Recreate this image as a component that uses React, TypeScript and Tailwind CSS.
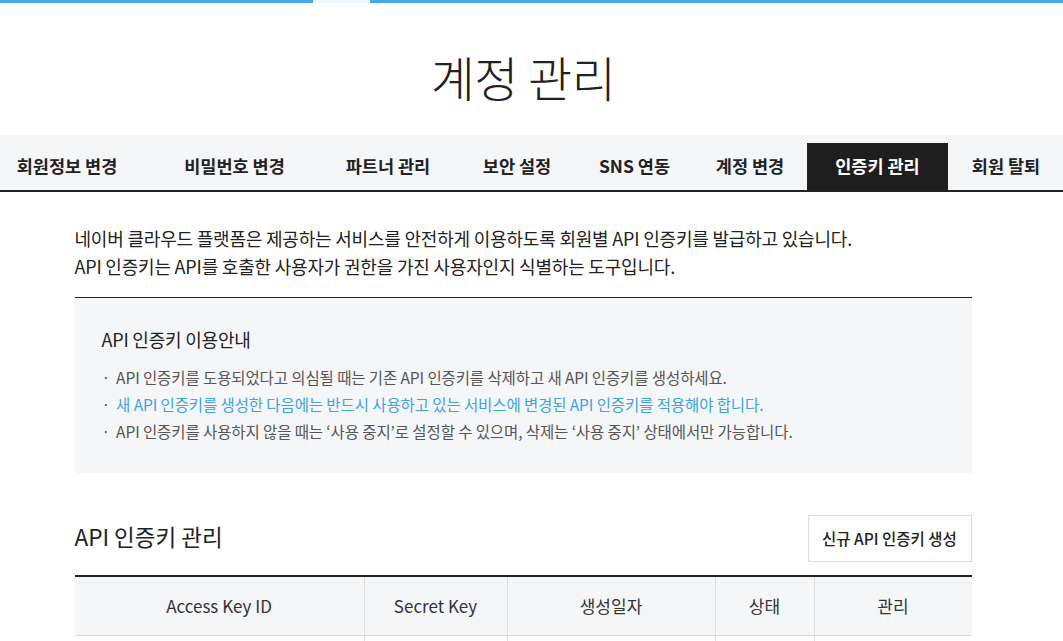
const tabs = [
  { label: '회원정보 변경', w: 'w-[168px]' },
  { label: '비밀번호 변경', w: 'w-[167px]' },
  { label: '파트너 관리', w: 'w-[140px]' },
  { label: '보안 설정', w: 'w-[118px]' },
  { label: 'SNS 연동', w: 'w-[117px]' },
  { label: '계정 변경', w: 'w-[114px]' },
  { label: '인증키 관리', w: 'w-[141px]', active: true },
  { label: '회원 탈퇴', w: 'w-[116px]' },
];

const columns = [
  { label: 'Access Key ID', w: 'w-[289px]' },
  { label: 'Secret Key', w: 'w-[143px]' },
  { label: '생성일자', w: 'w-[208px]' },
  { label: '상태', w: 'w-[99px]' },
  { label: '관리', w: 'flex-1' },
];

const font = "font-['Noto_Sans_CJK_KR','Noto_Sans',sans-serif]";

export default function App() {
  return (
    <div className={`${font} min-h-screen w-full overflow-hidden bg-white text-[#222]`}>
      {/* top progress bar */}
      <div className="flex h-[3px] w-full">
        <div className="w-[313px] bg-[#46a8e3]" />
        <div className="w-[57px] bg-[#eef7fd]" />
        <div className="flex-1 bg-[#46a8e3]" />
      </div>

      <div className="w-[1046px]">
        <h1 className="pt-[35px] pb-[21px] text-center text-[48px] font-light leading-[76px] tracking-[-0.5px] text-[#222]">
          계정 관리
        </h1>
      </div>

      {/* tabs */}
      <div className="h-[57px] w-full border-b-2 border-[#222] bg-[#f5f6f8]">
        <div className="-ml-[17px] flex h-full items-end">
          {tabs.map((t) => (
            <div
              key={t.label}
              className={`${t.w} flex h-[47px] shrink-0 items-center justify-center text-[17.5px] font-bold ${
                t.active ? 'bg-[#1e1e1e] text-white' : 'text-[#222]'
              }`}
            >
              {t.label}
            </div>
          ))}
        </div>
      </div>

      <div className="w-[1046px]">
        <div className="mx-auto w-[897px]">
          <div className="pt-[32px] pb-[17px] text-[18px] leading-[28px] tracking-[-0.2px] text-[#222]">
            <p>네이버 클라우드 플랫폼은 제공하는 서비스를 안전하게 이용하도록 회원별 API 인증키를 발급하고 있습니다.</p>
            <p>API 인증키는 API를 호출한 사용자가 권한을 가진 사용자인지 식별하는 도구입니다.</p>
          </div>

          <div className="border-t border-[#222] bg-[#f5f6f8] px-[27px] pt-[27px] pb-[28px]">
            <h3 className="text-[18px] leading-[28px] tracking-[-0.2px] text-[#222]">API 인증키 이용안내</h3>
            <ul className="mt-[11px] text-[15.5px] leading-[27px] tracking-[-0.1px] text-[#555]">
              <li className="flex gap-[6px]">
                <span>·</span>
                <span>API 인증키를 도용되었다고 의심될 때는 기존 API 인증키를 삭제하고 새 API 인증키를 생성하세요.</span>
              </li>
              <li className="flex gap-[6px] text-[#3fa3e2]">
                <span className="text-[#555]">·</span>
                <span>새 API 인증키를 생성한 다음에는 반드시 사용하고 있는 서비스에 변경된 API 인증키를 적용해야 합니다.</span>
              </li>
              <li className="flex gap-[6px]">
                <span>·</span>
                <span>API 인증키를 사용하지 않을 때는 ‘사용 중지’로 설정할 수 있으며, 삭제는 ‘사용 중지’ 상태에서만 가능합니다.</span>
              </li>
            </ul>
          </div>

          <div className="mt-[42px] flex items-center justify-between">
            <h2 className="pb-[4px] text-[22.5px] text-[#222]">API 인증키 관리</h2>
            <button className="h-[47px] w-[164px] border border-[#dcdcdc] bg-white text-[15.5px] font-medium text-[#222]">
              신규 API 인증키 생성
            </button>
          </div>

          <div className="mt-[13px] border-t-2 border-[#222]">
            <div className="flex h-[59px] border-b border-[#ddd] bg-[#f5f6f8]">
              {columns.map((c, i) => (
                <div
                  key={c.label}
                  className={`${c.w} flex items-center justify-center text-[17px] text-[#333] ${
                    i > 0 ? 'border-l border-[#ddd]' : ''
                  }`}
                >
                  {c.label}
                </div>
              ))}
            </div>
            <div className="flex h-[59px]">
              {columns.map((c, i) => (
                <div key={c.label} className={`${c.w} ${i > 0 ? 'border-l border-[#ddd]' : ''}`} />
              ))}
            </div>
          </div>
        </div>
      </div>
    </div>
  );
}
